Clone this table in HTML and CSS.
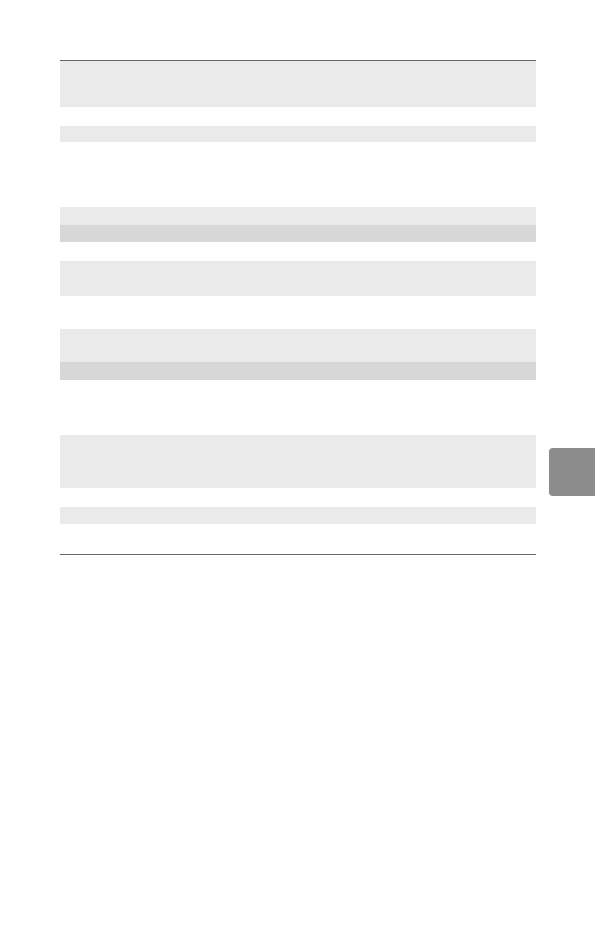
FILE: index.html
```html
<!DOCTYPE html>
<html lang="en">
<head>
<meta charset="utf-8">
<title>Table page</title>
<link rel="stylesheet" href="styles.css">
</head>
<body>
<div class="page">
  <div class="table">
    <div class="row light h46"></div>
    <div class="row h19"></div>
    <div class="row light h16"></div>
    <div class="row h65"></div>
    <div class="row light h18"></div>
    <div class="row dark h17"></div>
    <div class="row h19"></div>
    <div class="row light h35"></div>
    <div class="row h33"></div>
    <div class="row light h33"></div>
    <div class="row dark h18"></div>
    <div class="row h55"></div>
    <div class="row light h53"></div>
    <div class="row h19"></div>
    <div class="row light h17"></div>
    <div class="row h30"></div>
  </div>
</div>
<div class="thumb-tab"></div>
</body>
</html>
```

FILE: styles.css
```css
html, body {
  margin: 0;
  padding: 0;
  background: #ffffff;
  font-family: "Liberation Sans", Arial, sans-serif;
}
.page {
  width: 595px;
  height: 935px;
  padding: 60px 0 0 60px;
  box-sizing: border-box;
  display: flex;
  flex-direction: column;
}
.table {
  width: 476px;
  border-top: 1px solid #666666;
  border-bottom: 1px solid #666666;
  display: flex;
  flex-direction: column;
}
.row { flex: none; }
.light { background: #e9eae9; }
.dark { background: #d7d7d7; }
.h16 { height: 16px; }
.h17 { height: 17px; }
.h18 { height: 18px; }
.h19 { height: 19px; }
.h30 { height: 30px; }
.h33 { height: 33px; }
.h35 { height: 35px; }
.h46 { height: 46px; }
.h53 { height: 53px; }
.h55 { height: 55px; }
.h65 { height: 65px; }
.thumb-tab {
  position: absolute;
  top: 448px;
  right: 0;
  width: 46px;
  height: 48px;
  background: #8c8c8c;
  border-radius: 4px 0 0 4px;
}
```
